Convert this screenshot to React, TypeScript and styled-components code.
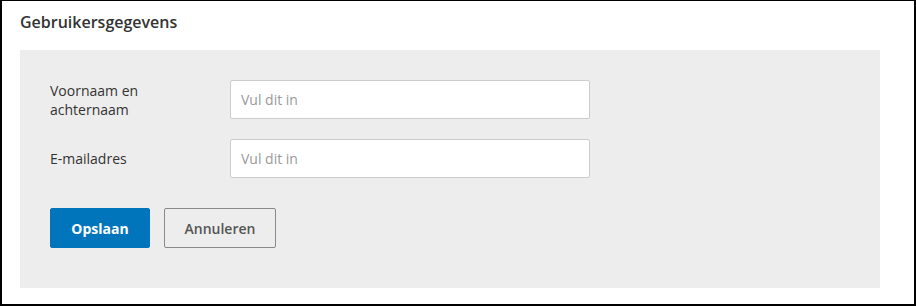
import styled, { createGlobalStyle } from "styled-components";

const Global = createGlobalStyle`
  html, body {
    margin: 0;
    padding: 0;
    background: #fff;
  }
  * {
    box-sizing: border-box;
  }
`;

const Frame = styled.section`
  width: 916px;
  height: 306px;
  border-style: solid;
  border-color: #000;
  border-width: 1px 2px 2px 2px;
  padding: 10px 34px 0 18px;
  font-family: "Open Sans", "Liberation Sans", sans-serif;
  color: #333;
`;

const Title = styled.h2`
  margin: 0 0 17px;
  font-size: 16px;
  font-weight: 600;
  line-height: 22px;
  color: #333;
`;

const Panel = styled.div`
  background: #ededed;
  height: 238px;
  padding: 30px 30px 40px;
`;

const Fields = styled.div`
  display: flex;
  flex-direction: column;
  gap: 20px;
`;

const Row = styled.div`
  display: flex;
  align-items: center;
`;

const Label = styled.label`
  width: 180px;
  padding-right: 30px;
  font-size: 14px;
  line-height: 19px;
  color: #333;
`;

const Input = styled.input`
  width: 360px;
  height: 39px;
  border: 1px solid #cccccc;
  border-radius: 2px;
  background: #fff;
  padding: 0 10px;
  font-family: inherit;
  font-size: 14px;
  color: #333;
  outline: none;
  &::placeholder {
    color: #9a9a9a;
  }
`;

const Actions = styled.div`
  display: flex;
  gap: 14px;
  margin-top: 30px;
`;

const Button = styled.button<{ $primary?: boolean }>`
  height: 40px;
  padding: 0;
  width: ${(p) => (p.$primary ? "100px" : "112px")};
  border-radius: 2px;
  font-family: inherit;
  font-size: 14px;
  font-weight: ${(p) => (p.$primary ? 700 : 600)};
  cursor: pointer;
  border: 1px solid ${(p) => (p.$primary ? "#0075bc" : "#8a8a8a")};
  background: ${(p) => (p.$primary ? "#0075bc" : "transparent")};
  color: ${(p) => (p.$primary ? "#fff" : "#555")};
`;

export default function App() {
  return (
    <>
      <Global />
      <Frame>
        <Title>Gebruikersgegevens</Title>
        <Panel>
          <Fields>
            <Row>
              <Label htmlFor="naam">Voornaam en achternaam</Label>
              <Input id="naam" placeholder="Vul dit in" />
            </Row>
            <Row>
              <Label htmlFor="email">E-mailadres</Label>
              <Input id="email" placeholder="Vul dit in" />
            </Row>
          </Fields>
          <Actions>
            <Button $primary>Opslaan</Button>
            <Button>Annuleren</Button>
          </Actions>
        </Panel>
      </Frame>
    </>
  );
}
